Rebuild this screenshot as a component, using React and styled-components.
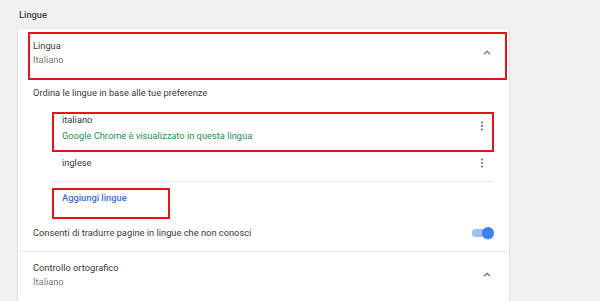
import React from "react";
import styled, { createGlobalStyle } from "styled-components";

const GlobalStyle = createGlobalStyle`
  html, body {
    margin: 0;
    padding: 0;
    background: #f1f1f1;
    font-family: Roboto, "Liberation Sans", sans-serif;
    font-size: 9.3px;
    color: #3a3a3a;
  }
`;

const Page = styled.div`
  width: 600px;
  height: 301px;
  overflow: hidden;
  background: #f1f1f1;
`;

const SectionTitle = styled.div`
  height: 29px;
  padding-left: 19px;
  display: flex;
  align-items: center;
  padding-bottom: 1px;
  box-sizing: border-box;
  font-weight: 500;
  color: #444;
`;

const Card = styled.div`
  margin-left: 18px;
  width: 491px;
  background: #fff;
  padding-top: 3px;
  box-shadow: 0 0 1px rgba(0, 0, 0, 0.18), 0 1px 2px rgba(0, 0, 0, 0.08);
  height: 300px;
`;

const Marked = styled.div`
  border: 2px solid ${(p) => (p.$marked ? "#e3141b" : "transparent")};
  box-sizing: border-box;
`;

const ExpandRow = styled(Marked)`
  display: flex;
  align-items: flex-start;
  justify-content: space-between;
  margin: 0 2px 0 10px;
  height: 48px;
  padding: 5px 14px 0 3px;
`;

const TwoLine = styled.div`
  display: flex;
  flex-direction: column;
  line-height: 14px;
`;

const Secondary = styled.span`
  color: #7a7a7a;
`;

const Chevron = styled.svg`
  width: 8px;
  height: 5px;
  margin-top: ${(p) => p.$top}px;
`;

const Hint = styled.div`
  margin: 6px 0 0 15px;
  line-height: 14px;
`;

const LangList = styled.div`
  margin: 12px 15px 0 34px;
  border-bottom: 1px solid #ebebeb;
`;

const LangRow = styled(Marked)`
  display: flex;
  align-items: center;
  justify-content: space-between;
  padding: ${(p) => (p.$marked ? "0 8px 7px" : "2px 8px 9px")};
`;

const LangName = styled.div`
  display: flex;
  flex-direction: column;
`;

const Line = styled.span`
  line-height: ${(p) => p.$lh || 14}px;
  color: ${(p) => p.$color || "#3a3a3a"};
  margin-top: ${(p) => p.$gap || 0}px;
`;

const Dots = styled.svg`
  width: 4px;
  height: 10px;
  margin-top: ${(p) => p.$shift || 0}px;
`;

const AddButton = styled(Marked)`
  margin: 6px 0 0 34px;
  width: 118px;
  height: 31px;
  padding: 1px 0 0 8px;
  line-height: 14px;
  color: #4070d8;
  font-weight: 500;
`;

const ToggleRow = styled.div`
  display: flex;
  align-items: center;
  justify-content: space-between;
  margin-top: 7px;
  padding: 0 15px 11px 15px;
  line-height: 14px;
  border-bottom: 1px solid #ebebeb;
`;

const Toggle = styled.div`
  position: relative;
  width: 22px;
  height: 12px;
  display: flex;
  align-items: center;
`;

const Track = styled.div`
  width: 18px;
  height: 8px;
  border-radius: 4px;
  background: #9fbff7;
`;

const Knob = styled.div`
  position: absolute;
  right: 0;
  top: 0;
  width: 12px;
  height: 12px;
  border-radius: 50%;
  background: #3b82f3;
  box-shadow: 0 1px 1px rgba(0, 0, 0, 0.2);
`;

const SpellRow = styled.div`
  display: flex;
  align-items: flex-start;
  justify-content: space-between;
  padding: 9px 18px 0 15px;
`;

const ChevronUp = ({ top }) => (
  <Chevron $top={top} viewBox="0 0 8 5">
    <path d="M1 4.2 L4 1.2 L7 4.2" fill="none" stroke="#808080" strokeWidth="1.5" />
  </Chevron>
);

const MoreIcon = ({ shift }) => (
  <Dots $shift={shift} viewBox="0 0 4 10">
    <circle cx="2" cy="1.5" r="1.1" fill="#777" />
    <circle cx="2" cy="5" r="1.1" fill="#777" />
    <circle cx="2" cy="8.5" r="1.1" fill="#777" />
  </Dots>
);

export default function App() {
  return (
    <Page>
      <GlobalStyle />
      <SectionTitle>Lingue</SectionTitle>
      <Card>
        <ExpandRow $marked>
          <TwoLine>
            <span>Lingua</span>
            <Secondary>Italiano</Secondary>
          </TwoLine>
          <ChevronUp top={11} />
        </ExpandRow>
        <Hint>Ordina le lingue in base alle tue preferenze</Hint>
        <LangList>
          <LangRow $marked>
            <LangName>
              <Line $lh={12}>italiano</Line>
              <Line $gap={3} $color="#249050">
                Google Chrome è visualizzato in questa lingua
              </Line>
            </LangName>
            <MoreIcon shift={-6} />
          </LangRow>
          <LangRow>
            <LangName>
              <Line>inglese</Line>
            </LangName>
            <MoreIcon />
          </LangRow>
        </LangList>
        <AddButton $marked>Aggiungi lingue</AddButton>
        <ToggleRow>
          <span>Consenti di tradurre pagine in lingue che non conosci</span>
          <Toggle>
            <Track />
            <Knob />
          </Toggle>
        </ToggleRow>
        <SpellRow>
          <TwoLine>
            <span>Controllo ortografico</span>
            <Secondary>Italiano</Secondary>
          </TwoLine>
          <ChevronUp top={11} />
        </SpellRow>
      </Card>
    </Page>
  );
}
